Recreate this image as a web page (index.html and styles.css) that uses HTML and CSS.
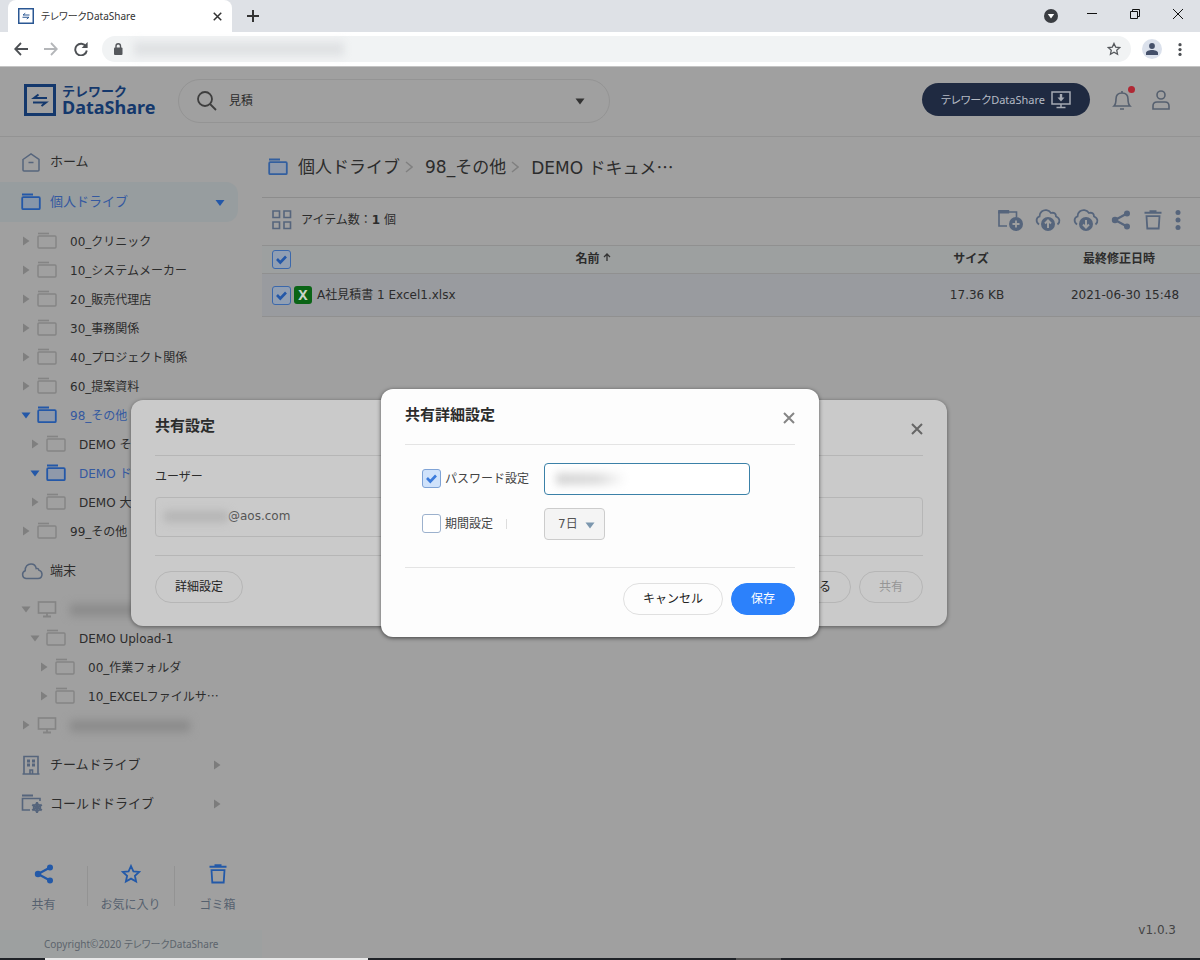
FILE: index.html
```html
<!DOCTYPE html>
<html lang="ja">
<head>
<meta charset="utf-8">
<title>テレワークDataShare</title>
<link rel="stylesheet" href="styles.css">
</head>
<body>
<svg class="sprite" aria-hidden="true">
  <symbol id="folder" viewBox="0 0 20 18"><path d="M1 1.5h11" stroke="currentColor" stroke-width="1.6"/><rect x="1" y="4" width="18" height="12" rx="1" fill="none" stroke="currentColor" stroke-width="1.4"/></symbol>
  <symbol id="folder-bold" viewBox="0 0 20 18"><path d="M1 1.5h11" stroke="currentColor" stroke-width="2"/><rect x="1.2" y="4.2" width="17.6" height="12" rx="1" fill="#4a7fd0" fill-opacity=".2" stroke="currentColor" stroke-width="1.8"/></symbol>
  <symbol id="right" viewBox="0 0 8 10"><path d="M1 .5l6.500 4.500L1 9.500z" fill="currentColor"/></symbol>
  <symbol id="down" viewBox="0 0 10 8"><path d="M.5 1.5h9L5 7.5z" fill="currentColor"/></symbol>
  <symbol id="monitor" viewBox="0 0 20 18"><rect x="1.5" y="2" width="17" height="11" fill="none" stroke="currentColor" stroke-width="1.6"/><path d="M6 16.5h8M10 13v3" stroke="currentColor" stroke-width="1.8"/></symbol>
  <symbol id="share" viewBox="0 0 20 20"><path d="M16 3.5L4 10l12 6.500" fill="none" stroke="currentColor" stroke-width="2.200"/><circle cx="16" cy="3.500" r="3" fill="currentColor"/><circle cx="4" cy="10" r="3.200" fill="currentColor"/><circle cx="16" cy="16.500" r="3" fill="currentColor"/></symbol>
  <symbol id="star" viewBox="0 0 20 20"><path d="M10 2l2.400 5.300 5.800.6-4.300 3.900 1.200 5.700-5.100-2.900-5.100 2.900 1.200-5.700L1.800 7.900l5.800-.6z" fill="none" stroke="currentColor" stroke-width="1.800"/></symbol>
  <symbol id="trash" viewBox="0 0 20 20"><path d="M1.500 2.800h17M6.500 1.300h7" stroke="currentColor" stroke-width="2"/><path d="M3.500 6.200h13l-.8 12.300H4.300z" fill="none" stroke="currentColor" stroke-width="1.800"/></symbol>
  <symbol id="cross" viewBox="0 0 12 12"><path d="M1 1l10 10M11 1L1 11" stroke="currentColor" stroke-width="2"/></symbol>
  <symbol id="dots" viewBox="0 0 6 20"><circle cx="3" cy="2.500" r="2.500"/><circle cx="3" cy="10" r="2.500"/><circle cx="3" cy="17.500" r="2.500"/></symbol>
  <symbol id="logo" viewBox="0 0 32 32"><rect x="1.500" y="1.500" width="29" height="29" fill="none" stroke="currentColor" stroke-width="3"/><path d="M23 14H10l4.500-3.500M9 18.500h13l-4.500 3.500" fill="none" stroke="currentColor" stroke-width="2"/></symbol>
</svg>

<header class="browser">
  <div class="tabs">
    <div class="tab">
      <svg class="i16 brand"><use href="#logo"/></svg>
      <span class="tab-title">テレワークDataShare</span>
      <button class="plain" aria-label="タブを閉じる"><svg class="i8"><use href="#cross"/></svg></button>
    </div>
    <button class="plain new-tab" aria-label="新しいタブ"><svg class="i12" viewBox="0 0 12 12"><path d="M6 0v12M0 6h12" stroke="currentColor" stroke-width="2"/></svg></button>
    <div class="window-buttons">
      <button class="plain tab-search" aria-label="タブを検索"><svg class="i14" viewBox="0 0 14 14"><circle cx="7" cy="7" r="7" fill="#3a3d42"/><path d="M3.800 5h6.400L7 9.500z" fill="#fff"/></svg></button>
      <button class="plain" aria-label="最小化"><svg class="i10" viewBox="0 0 10 10"><path d="M0 4.500h10" stroke="#111"/></svg></button>
      <button class="plain" aria-label="元に戻す"><svg class="i10" viewBox="0 0 10 10" fill="none" stroke="#111"><path d="M.5 2.500h7v7h-7zM2.500 2.500v-2h7v7h-2"/></svg></button>
      <button class="plain" aria-label="閉じる"><svg class="i10" viewBox="0 0 10 10"><path d="M0 0l10 10M10 0L0 10" stroke="#111"/></svg></button>
    </div>
  </div>
  <div class="toolbar">
    <button class="plain" aria-label="戻る"><svg class="i14" viewBox="0 0 14 14" fill="none" stroke="#4d5054" stroke-width="1.800"><path d="M14 7H1.500M7 1L1.200 7 7 13"/></svg></button>
    <button class="plain" aria-label="進む"><svg class="i14" viewBox="0 0 14 14" fill="none" stroke="#b4b6b9" stroke-width="1.800"><path d="M0 7h12.500M7 1l5.800 6L7 13"/></svg></button>
    <button class="plain" aria-label="再読み込み"><svg class="i14" viewBox="0 0 14 14"><path d="M12 4.500A5.800 5.800 0 1 0 12.800 8.500" fill="none" stroke="#4d5054" stroke-width="1.900"/><path d="M13.600 0v6H7.600z" fill="#4d5054"/></svg></button>
    <div class="address">
      <svg class="i12" viewBox="0 0 12 12"><rect x="2" y="4.500" width="8.500" height="7.500" rx="1" fill="#55585c"/><path d="M4 5V3a2.200 2.200 0 0 1 4.500 0v2" fill="none" stroke="#55585c" stroke-width="1.400"/></svg>
      <span class="smudge url"></span>
      <svg class="i14 page-star"><use href="#star"/></svg>
    </div>
    <span class="avatar"><svg class="i12" viewBox="0 0 12 12" fill="#44506a"><circle cx="6" cy="3" r="2.900"/><path d="M0 12V10c0-2 3-3 6-3s6 1 6 3v2z"/></svg></span>
    <button class="plain menu" aria-label="メニュー"><svg viewBox="0 0 6 20" fill="#4d5054"><use href="#dots"/></svg></button>
  </div>
</header>

<div class="app">
  <header class="app-header">
    <a class="logo" href="#"><svg><use href="#logo"/></svg><span><b class="logo-top">テレワーク</b><b class="logo-bottom">DataShare</b></span></a>
    <div class="search">
      <svg class="i20" viewBox="0 0 20 20" fill="none" stroke="#3e3e3e" stroke-width="1.800"><circle cx="8" cy="8" r="7"/><path d="M13 13l6 6"/></svg>
      <input type="text" value="見積" aria-label="検索">
      <svg class="i10 dark"><use href="#down"/></svg>
    </div>
    <button class="download">テレワークDataShare
      <svg viewBox="0 0 20 18" fill="none" stroke="#a5a9b2" stroke-width="1.500"><path d="M1 1h18v12H1zM5.500 16.500h9M10 13v3"/><path d="M10 3v4" stroke-width="2.400"/><path d="M6.500 6.500h7L10 10.500z" fill="#a5a9b2" stroke="none"/></svg>
    </button>
    <button class="plain bell" aria-label="通知"><svg class="i20" viewBox="0 0 20 20" fill="none" stroke="#56606f" stroke-width="1.600"><path d="M2 16h16c-1.500-1.500-2-3-2-7 0-4-2.500-6-6-6S4 5 4 9c0 4-.5 5.500-2 7zM10 3V1M8 19h4"/></svg><span class="badge"></span></button>
    <button class="plain" aria-label="アカウント"><svg class="i20" viewBox="0 0 20 20" fill="none" stroke="#56606f" stroke-width="1.600"><circle cx="10" cy="5" r="4"/><path d="M2 19v-3c0-3 2-4 4-4h8c2 0 4 1 4 4v3z"/></svg></button>
  </header>

  <div class="body">
    <aside class="side">
      <nav>
        <a class="drive" href="#"><svg viewBox="0 0 20 20" fill="none" stroke="currentColor" stroke-width="1.500"><path d="M2 7.500L10 2l8 5.500V18a1 1 0 0 1-1 1H3a1 1 0 0 1-1-1zM7.500 10.500h5"/></svg><span>ホーム</span></a>
        <a class="drive on" href="#"><svg viewBox="0 0 20 18"><use href="#folder-bold"/></svg><span>個人ドライブ</span><svg class="caret"><use href="#down"/></svg></a>
        <div class="tree">
          <a href="#"><svg class="caret"><use href="#right"/></svg><svg><use href="#folder"/></svg><span>00_クリニック</span></a>
          <a href="#"><svg class="caret"><use href="#right"/></svg><svg><use href="#folder"/></svg><span>10_システムメーカー</span></a>
          <a href="#"><svg class="caret"><use href="#right"/></svg><svg><use href="#folder"/></svg><span>20_販売代理店</span></a>
          <a href="#"><svg class="caret"><use href="#right"/></svg><svg><use href="#folder"/></svg><span>30_事務関係</span></a>
          <a href="#"><svg class="caret"><use href="#right"/></svg><svg><use href="#folder"/></svg><span>40_プロジェクト関係</span></a>
          <a href="#"><svg class="caret"><use href="#right"/></svg><svg><use href="#folder"/></svg><span>60_提案資料</span></a>
          <a class="on" href="#"><svg class="caret"><use href="#down"/></svg><svg><use href="#folder-bold"/></svg><span>98_その他</span></a>
          <a class="l2" href="#"><svg class="caret"><use href="#right"/></svg><svg><use href="#folder"/></svg><span>DEMO その他</span></a>
          <a class="l2 on" href="#"><svg class="caret"><use href="#down"/></svg><svg><use href="#folder-bold"/></svg><span>DEMO ドキ</span></a>
          <a class="l2" href="#"><svg class="caret"><use href="#right"/></svg><svg><use href="#folder"/></svg><span>DEMO 大容量</span></a>
          <a href="#"><svg class="caret"><use href="#right"/></svg><svg><use href="#folder"/></svg><span>99_その他</span></a>
        </div>
        <a class="drive" href="#"><svg class="cloud" viewBox="0 0 22 20" fill="none" stroke="currentColor" stroke-width="1.500"><path d="M5 17.500a4 4 0 0 1-.8-7.700C4 5.500 6.500 3 10 3c3 0 4.800 1.800 5.200 4.500 1.300-.3 2.300.2 2.600 1.600 2 .6 3.200 2.200 3.200 4.200 0 2.500-1.700 4.200-4 4.200z"/></svg><span>端末</span></a>
        <div class="tree">
          <a href="#" aria-label="端末1"><svg class="caret"><use href="#down"/></svg><svg><use href="#monitor"/></svg><span class="smudge host"></span></a>
          <a class="l2" href="#"><svg class="caret"><use href="#down"/></svg><svg><use href="#folder"/></svg><span>DEMO Upload-1</span></a>
          <a class="l3" href="#"><svg class="caret"><use href="#right"/></svg><svg><use href="#folder"/></svg><span>00_作業フォルダ</span></a>
          <a class="l3" href="#"><svg class="caret"><use href="#right"/></svg><svg><use href="#folder"/></svg><span>10_EXCELファイルサ<span class="cjk">…</span></span></a>
          <a href="#" aria-label="端末2"><svg class="caret"><use href="#right"/></svg><svg><use href="#monitor"/></svg><span class="smudge host"></span></a>
        </div>
        <a class="drive" href="#"><svg viewBox="0 0 20 20" fill="none" stroke="currentColor" stroke-width="1.600"><path d="M3 19V1.500h14V19M1.500 19h17M9 19v-4h2.500v4"/><path d="M6 6h3M11 6h3M6 10h3M11 10h3" stroke-width="2.800"/></svg><span>チームドライブ</span><svg class="caret muted"><use href="#right"/></svg></a>
        <a class="drive" href="#"><svg class="cold" viewBox="0 0 22 20" fill="none" stroke="currentColor" stroke-width="1.600"><path d="M1 1.500h11" stroke-width="2"/><path d="M19 7V4.500H1.500V16H9"/><path d="M16 8v11M11.200 10.700l9.600 5.600M20.800 10.700l-9.600 5.600" stroke-width="2.200"/><circle cx="16" cy="13.500" r="3.400"/></svg><span>コールドドライブ</span><svg class="caret muted"><use href="#right"/></svg></a>
      </nav>
      <div class="shortcuts">
        <a href="#"><svg class="i20"><use href="#share"/></svg>共有</a>
        <a href="#"><svg class="i20"><use href="#star"/></svg>お気に入り</a>
        <a href="#"><svg class="i20"><use href="#trash"/></svg>ゴミ箱</a>
      </div>
      <p class="copyright">Copyright©2020 テレワークDataShare</p>
    </aside>

    <main class="content">
      <div class="crumbs">
        <svg><use href="#folder-bold"/></svg>
        <a href="#">個人ドライブ</a><svg class="sep" viewBox="0 0 8 12"><path d="M1 1l6 5-6 5" fill="none" stroke="#808080" stroke-width="1.500"/></svg>
        <a href="#">98_その他</a><svg class="sep" viewBox="0 0 8 12"><path d="M1 1l6 5-6 5" fill="none" stroke="#808080" stroke-width="1.500"/></svg>
        <a href="#">DEMO ドキュメ<span class="cjk">…</span></a>
      </div>
      <div class="actions">
        <button class="plain" aria-label="グリッド表示"><svg class="i20" viewBox="0 0 20 20" fill="none" stroke="currentColor" stroke-width="1.600"><path d="M1 1h6.500v6.500H1zM12 1h6.500v6.500H12zM1 12h6.500v6.500H1zM12 12h6.500v6.500H12z"/></svg></button>
        <span class="count">アイテム数：<b>1</b> 個</span>
        <div class="tools">
          <button class="plain" aria-label="新規フォルダ"><svg class="i26" viewBox="0 0 26 24"><path d="M10 18H2V4h17.500v5" fill="none" stroke="currentColor" stroke-width="1.600"/><path d="M1.200 2h11v3.500h-11z" fill="currentColor"/><circle cx="19" cy="16" r="7" fill="currentColor"/><path d="M19 12.500v7M15.500 16h7" stroke="#a0a0a0" stroke-width="1.800"/></svg></button>
          <button class="plain" aria-label="アップロード"><svg class="i26" viewBox="0 0 26 24"><path d="M4 16.500C.5 14 1 9.500 4.500 8.500 4.500 4 8 1.800 11.500 2.200c2 .2 3.500 1.300 4.500 2.800 3-.8 5 .5 5 3.500 4 1.500 4.500 5.500 1.500 8" fill="none" stroke="currentColor" stroke-width="1.800"/><circle cx="13" cy="16" r="7" fill="currentColor"/><path d="M13 20v-7M10 15.500l3-3 3 3" fill="none" stroke="#a0a0a0" stroke-width="2"/></svg></button>
          <button class="plain" aria-label="ダウンロード"><svg class="i26" viewBox="0 0 26 24"><path d="M4 16.500C.5 14 1 9.500 4.500 8.500 4.500 4 8 1.800 11.500 2.200c2 .2 3.500 1.300 4.500 2.800 3-.8 5 .5 5 3.500 4 1.500 4.500 5.500 1.500 8" fill="none" stroke="currentColor" stroke-width="1.800"/><circle cx="13" cy="16" r="7" fill="currentColor"/><path d="M13 12v7M10 16.500l3 3 3-3" fill="none" stroke="#a0a0a0" stroke-width="2"/></svg></button>
          <button class="plain" aria-label="共有"><svg class="i20"><use href="#share"/></svg></button>
          <button class="plain" aria-label="削除"><svg class="i20"><use href="#trash"/></svg></button>
          <button class="plain more" aria-label="その他"><svg viewBox="0 0 6 20" fill="currentColor"><use href="#dots"/></svg></button>
        </div>
      </div>
      <table class="files">
        <thead>
          <tr><th class="c-check"><input class="check" type="checkbox" checked aria-label="すべて選択"></th><th>名前<svg viewBox="0 0 8 8" fill="none" stroke="#333" stroke-width="1.300"><path d="M4 8V1M1 4l3-3 3 3"/></svg></th><th class="c-size">サイズ</th><th class="c-date">最終修正日時</th></tr>
        </thead>
        <tbody>
          <tr><td><input class="check" type="checkbox" checked aria-label="A社見積書 1 Excel1.xlsx を選択"></td><td><div class="file"><span class="xl">X</span>A社見積書 1 Excel1.xlsx</div></td><td class="num">17.36 KB</td><td class="num">2021-06-30 15:48</td></tr>
        </tbody>
      </table>
      <p class="version">v1.0.3</p>
    </main>
  </div>

  <div class="layer back">
    <section class="dialog share-dialog" role="dialog" aria-label="共有設定">
      <div class="dialog-head"><h2>共有設定</h2><button class="plain" aria-label="閉じる"><svg class="i12"><use href="#cross"/></svg></button></div>
      <div class="share-body">
        <label for="user">ユーザー</label>
        <div class="user-field"><span class="smudge user"></span><input id="user" type="text" value="@aos.com"></div>
      </div>
      <div class="dialog-foot"><button class="pill">詳細設定</button><span class="grow"></span><button class="pill">閉じる</button><button class="pill" disabled>共有</button></div>
    </section>
  </div>

  <div class="layer">
    <section class="dialog detail-dialog" role="dialog" aria-label="共有詳細設定">
      <div class="dialog-head"><h2>共有詳細設定</h2><button class="plain" aria-label="閉じる"><svg class="i12"><use href="#cross"/></svg></button></div>
      <div class="options">
        <label><input class="check" type="checkbox" checked>パスワード設定</label>
        <div class="password"><input type="password" aria-label="パスワード"><span class="smudge pass"></span></div>
        <label><input class="check" type="checkbox">期間設定<i class="tick"></i></label>
        <div class="select"><select aria-label="期間"><option>7日</option></select><svg class="i10"><use href="#down"/></svg></div>
      </div>
      <div class="dialog-foot"><span class="grow"></span><button class="pill cancel">キャンセル</button><button class="pill primary">保存</button></div>
    </section>
  </div>
</div>
<footer class="taskbar"><span class="lit"></span><span class="dim"></span></footer>
</body>
</html>
```
FILE: styles.css
```css
* { box-sizing: border-box; }
body {
  margin: 0;
  min-height: 100vh;
  display: flex;
  flex-direction: column;
  font: 12px/16px "DejaVu Sans", "Noto Sans CJK JP", sans-serif;
  color: #2c2c2c;
  background: #a0a0a0;
}
a { color: inherit; text-decoration: none; }
button, input, select { font: inherit; color: inherit; }
svg { display: block; flex: none; }
.sprite { position: absolute; width: 0; height: 0; }
.plain { border: 0; padding: 0; background: none; display: flex; align-items: center; justify-content: center; }
.i8 { width: 9px; height: 9px; }
.i10 { width: 10px; height: 10px; }
.i12 { width: 12px; height: 12px; }
.i14 { width: 14px; height: 14px; }
.i16 { width: 16px; height: 16px; }
.i20 { width: 20px; height: 20px; }
.i26 { width: 26px; height: 24px; }
.cjk { font-family: "Noto Sans CJK JP", sans-serif; }
.grow { flex: 1; }
.smudge { display: block; filter: blur(4px); }

/* Browser frame */
.browser { background: #fff; border-bottom: 1px solid #c4c4c4; }
.tabs { display: flex; align-items: center; height: 32px; padding-left: 8px; background: #dee1e6; color: #333; }
.tab { display: flex; align-items: center; gap: 7px; width: 224px; height: 32px; padding: 0 10px; background: #fff; border-radius: 8px 8px 0 0; }
.brand { color: #2a5793; }
.tab-title { flex: 1; font: 10px/16px "Noto Sans", "Noto Sans CJK JP", sans-serif; font-feature-settings: "palt"; }
.new-tab { margin-left: 15px; }
.window-buttons { display: flex; align-items: center; gap: 33px; margin-left: auto; padding: 0 17px 4px 0; }
.tab-search { margin: 4px -4px 0 0; }
.toolbar { display: flex; align-items: center; gap: 16px; height: 34px; padding: 0 18px 0 14px; }
.address { flex: 1; display: flex; align-items: center; height: 26px; padding: 0 10px; border-radius: 13px; background: #f1f3f4; margin-left: -2px; }
.url { width: 210px; height: 14px; margin-left: 10px; background: #dfe1e3; }
.page-star { margin-left: auto; color: #55585c; }
.avatar { display: flex; align-items: center; justify-content: center; width: 20px; height: 20px; margin-left: -5px; border-radius: 50%; background: #dbe1ec; }
.menu svg { width: 4px; height: 13px; }

/* Application header */
.app { position: relative; flex: 1; display: flex; flex-direction: column; }
.app-header { display: flex; align-items: center; height: 70px; padding: 0 29px 4px 24px; border-bottom: 1px solid #939393; }
.logo { display: flex; align-items: center; gap: 6px; width: 154px; color: #14386c; }
.logo svg { width: 32px; height: 32px; }
.logo-top, .logo-bottom { display: block; }
.logo-top { font: bold 13px/14px "Noto Sans CJK JP", sans-serif; }
.logo-bottom { font: bold 18px/18px "Noto Sans", sans-serif; }
.search { display: flex; align-items: center; gap: 12px; width: 432px; height: 44px; margin-top: 2px; padding: 0 24px 0 18px; border: 1px solid #949494; border-radius: 22px; }
.search input { flex: 1; min-width: 0; border: 0; padding: 0; background: none; outline: 0; }
.dark { color: #333; }
.download { display: flex; align-items: center; justify-content: center; gap: 6px; width: 168px; height: 33px; margin-left: auto; padding: 0; border: 0; border-radius: 17px; background: #1f2a41; color: #b5bac4; font: 11px/16px "Noto Sans", "Noto Sans CJK JP", sans-serif; font-feature-settings: "palt"; }
.download svg { width: 20px; height: 18px; }
.bell { position: relative; margin: 0 19px 0 22px; }
.badge { position: absolute; top: -4px; right: -3px; width: 7px; height: 7px; border-radius: 50%; background: #b02834; }

/* Sidebar */
.body { flex: 1; display: flex; }
.side { display: flex; flex-direction: column; width: 262px; padding-top: 5px; }
.drive { display: flex; align-items: center; gap: 9px; height: 39px; padding-left: 21px; margin-right: 24px; font-size: 13px; }
.drive > svg { width: 20px; height: 20px; color: #56657c; }
.drive > .cloud, .drive > .cold { width: 22px; margin-right: -2px; }
.drive > .caret { width: 10px; height: 10px; margin: 0 13px 0 auto; }
.drive > .muted { margin-right: 16px; color: #7c7c7c; }
.drive.on { height: 40px; margin-top: 1px; background: #979d9f; border-radius: 0 12px 12px 0; color: #3459a0; }
.drive.on > svg { height: 18px; color: #2458a8; }
.drive.on > .caret { height: 9px; }
.tree { padding: 5px 0; }
.tree a { display: flex; align-items: center; height: 29px; padding-left: 21px; white-space: nowrap; }
.tree .l2 { padding-left: 30px; }
.tree .l3 { padding-left: 39px; }
.tree svg { width: 20px; height: 18px; margin: 0 13px 2px 6px; color: #848484; }
.tree .caret { width: 10px; height: 10px; margin: 0 0 2px; color: #7f7f7f; }
.tree .on { color: #3459a0; }
.tree .on svg { color: #2458a8; }
.host { width: 120px; height: 12px; background: #8b8b8b; }
.shortcuts { display: flex; align-items: center; margin-top: auto; padding-bottom: 17px; color: #56616f; }
.shortcuts a { display: flex; flex-direction: column; align-items: center; gap: 13px; width: 87px; }
.shortcuts svg { color: #2359a8; }
.shortcuts a + a { background: linear-gradient(#939393, #939393) left 2px / 1px 40px no-repeat; }
.copyright { margin: 0; padding: 6px 0 6px 44px; background: #9da0a0; color: #5c646c; font: 10px/16px "Noto Sans", "Noto Sans CJK JP", sans-serif; font-feature-settings: "palt"; }

/* File list */
.content { flex: 1; display: flex; flex-direction: column; min-width: 0; }
.crumbs { display: flex; align-items: center; height: 61px; padding-left: 6px; border-bottom: 1px solid #8c8c8c; font-size: 17px; line-height: 24px; }
.crumbs svg { width: 20px; height: 18px; margin-right: 10px; color: #335f9f; }
.crumbs .sep { width: 8px; height: 12px; margin: 0 12px 0 5px; }
.actions { display: flex; align-items: center; height: 47px; padding: 0 19px 3px 10px; color: #56657c; }
.count { margin-left: 9px; color: #2c2c2c; }
.tools { display: flex; align-items: center; gap: 12px; margin-left: auto; }
.more svg { width: 6px; height: 20px; }
.files { width: 100%; border-collapse: collapse; table-layout: fixed; }
.files th { height: 28px; padding: 0 12px 2px 0; background: #9da0a0; border: solid #909090; border-width: 1px 0; }
.files th svg { display: inline-block; width: 8px; height: 8px; margin: 0 0 2px 3px; }
.files td { height: 43px; padding: 0; background: #999b9f; border-bottom: 1px solid #909090; }
.files .c-check { width: 32px; padding: 0; }
.c-size { width: 146px; }
.c-date { width: 150px; }
.files .check { display: block; margin-left: 10px; }
.num { text-align: center; }
.file { display: flex; align-items: center; gap: 5px; font-size: 12px; }
.xl { width: 18px; height: 18px; border-radius: 3px; background: #0a6416; color: #c8d4c8; font: bold 14px/18px "Noto Sans", sans-serif; text-align: center; }
.version { margin: auto 24px 20px auto; color: #444; }
.check { appearance: none; flex: none; width: 19px; height: 19px; margin: 0; border: 1px solid #9cb1cd; border-radius: 3px; background: #fff; }
.check:checked { border-color: #7fa3d6; background: #cfe2fb url("data:image/svg+xml,%3Csvg xmlns='http://www.w3.org/2000/svg' viewBox='0 0 17 17'%3E%3Cpath d='M4 8l3.300 3.500L13 5.500' fill='none' stroke='%233b7bdc' stroke-width='2.600'/%3E%3C/svg%3E") center / 17px; }
.files .check:checked { border-color: #3b68ab; background: #919fb3 url("data:image/svg+xml,%3Csvg xmlns='http://www.w3.org/2000/svg' viewBox='0 0 17 17'%3E%3Cpath d='M4 8l3.300 3.500L13 5.500' fill='none' stroke='%232458a8' stroke-width='2.600'/%3E%3C/svg%3E") center / 17px; }

/* Dialogs */
.layer { position: absolute; inset: 0; display: grid; place-items: center; }
.back { padding-right: 122px; }
.dialog { padding: 0 24px; border-radius: 12px; box-shadow: 0 1px 4px rgba(0, 0, 0, .45); }
.dialog-head { display: flex; justify-content: space-between; height: 56px; padding-top: 16px; border-bottom: 1px solid #e4e4e4; }
.dialog-head h2 { margin: 0; font-size: 15px; line-height: 20px; }
.dialog-head .plain { height: 12px; margin-top: 7px; color: #858585; }
.dialog-foot { display: flex; gap: 8px; padding-top: 15px; border-top: 1px solid #e4e4e4; }
.pill { height: 32px; padding: 0 19px; border: 1px solid #e0e0e0; border-radius: 16px; background: transparent; color: #222; }
.pill.primary { border-color: #2c81fb; background: #2c81fb; color: #fff; }
.share-dialog { width: 816px; height: 226px; background: #cacaca; }
.share-dialog .dialog-head, .share-dialog .dialog-foot, .share-dialog .pill { border-color: #b6b6b6; }
.share-dialog .plain { color: #666; }
.share-dialog .pill:disabled { color: #969696; }
.share-body { display: flex; flex-direction: column; gap: 12px; padding: 13px 0 18px; }
.user-field { display: flex; align-items: center; height: 40px; padding-left: 8px; border: 1px solid #b6b6b6; border-radius: 4px; }
.user-field input { flex: 1; border: 0; padding: 0 0 2px; background: none; color: #555; }
.user { width: 64px; height: 11px; background: #b4b4b4; }
.detail-dialog { width: 438px; height: 248px; background: #fdfdfd; box-shadow: 0 1px 4px rgba(0, 0, 0, .6); }
.options { display: grid; grid-template-columns: 122px 1fr; row-gap: 13px; align-items: center; padding: 18px 17px 27px; }
.options label { display: flex; align-items: center; gap: 4px; white-space: nowrap; color: #444; }
.tick { width: 1px; height: 10px; margin-left: 9px; background: #ddd; }
.password { position: relative; width: 206px; height: 32px; }
.password input { width: 100%; height: 100%; border: 1px solid #3b81a8; border-radius: 4px; background: #fff; outline: 0; }
.pass { position: absolute; left: 12px; top: 10px; width: 70px; height: 12px; background: linear-gradient(90deg, #d4d4d4, #dcdcdc 60%, #fff); }
.select { position: relative; width: 61px; height: 32px; }
.select select { appearance: none; width: 100%; height: 100%; padding: 0 13px; border: 1px solid #ccc; border-radius: 4px; background: #f4f4f4; color: #555; }
.select svg { position: absolute; right: 10px; top: 12px; color: #7c97ae; }
.cancel { width: 100px; padding: 0; }

/* Taskbar edge */
.taskbar { display: flex; height: 2px; background: #202328; }
.lit { width: 323px; margin-left: 45px; background: #e8e8e8; }
.dim { width: 45px; margin-left: 368px; background: #555; }
```
